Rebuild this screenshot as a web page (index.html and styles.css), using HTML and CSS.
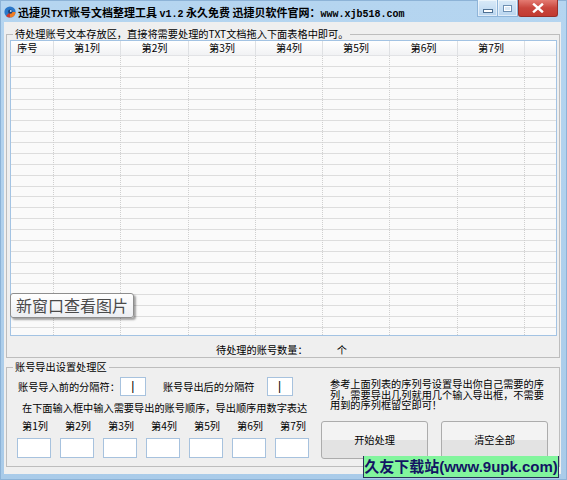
FILE: index.html
```html
<!DOCTYPE html>
<html lang="zh-CN">
<head>
<meta charset="utf-8">
<title>迅捷贝TXT账号文档整理工具</title>
<link rel="stylesheet" href="styles.css">
</head>
<body>
<div class="window">
  <div class="titlebar">
    <svg class="app-icon" viewBox="0 0 12 12">
      <circle cx="6" cy="6" r="5.6" fill="#2b78c9"/>
      <path d="M6 6 L11.6 6 A5.6 5.6 0 0 1 6 11.6 Z" fill="#ef7d22"/>
      <path d="M6 6 L6 11.6 A5.6 5.6 0 0 1 2 10 Z" fill="#d23a2a"/>
      <circle cx="6.3" cy="5.6" r="2.2" fill="#1b3f74"/>
      <circle cx="6.8" cy="5" r="0.9" fill="#bfe2ff"/>
    </svg>
    <div class="title">迅捷贝<span class="lat">TXT</span>账号文档整理工具 <span class="lat">v1.2</span> 永久免费 迅捷贝软件官网：<span class="lat">www.xjb518.com</span></div>
    <div class="caption">
      <div class="cb cb-min"><span class="min-glyph"></span></div>
      <div class="cb cb-max"><span class="max-glyph"></span></div>
      <div class="cb cb-close">
        <svg viewBox="0 0 12 10" class="x-glyph"><path d="M2 1.5 L10 8.5 M10 1.5 L2 8.5" stroke="#ffffff" stroke-width="2.4" stroke-linecap="square"/></svg>
      </div>
    </div>
  </div>
  <div class="client">
    <fieldset class="group group-list">
      <legend>待处理账号文本存放区，直接将需要处理的TXT文档拖入下面表格中即可。</legend>
      <div class="listview">
        <div class="lv-header">
          <div class="hcell first">序号</div>
          <div class="hcell">第1列</div>
          <div class="hcell">第2列</div>
          <div class="hcell">第3列</div>
          <div class="hcell">第4列</div>
          <div class="hcell">第5列</div>
          <div class="hcell">第6列</div>
          <div class="hcell">第7列</div>
          <div class="hcell filler"></div>
        </div>
        <div class="lv-body">
          <div class="col"></div>
          <div class="col"></div>
          <div class="col"></div>
          <div class="col"></div>
          <div class="col"></div>
          <div class="col"></div>
          <div class="col"></div>
          <div class="col"></div>
          <div class="col filler"></div>
        </div>
        <div class="popbtn">新窗口查看图片</div>
      </div>
      <div class="count-row"><span>待处理的账号数量：</span><span class="unit">个</span></div>
    </fieldset>
    <fieldset class="group group-export">
      <legend>账号导出设置处理区</legend>
      <div class="export">
        <div class="export-left">
          <div class="sep-row">
            <span class="sep-label">账号导入前的分隔符：</span>
            <div class="tb sep-box">|</div>
            <span class="sep-label second">账号导出后的分隔符</span>
            <div class="tb sep-box last">|</div>
          </div>
          <div class="hint">在下面输入框中输入需要导出的账号顺序，导出顺序用数字表达</div>
          <div class="cols-grid">
            <span class="clabel">第1列</span>
            <span class="clabel">第2列</span>
            <span class="clabel">第3列</span>
            <span class="clabel">第4列</span>
            <span class="clabel">第5列</span>
            <span class="clabel">第6列</span>
            <span class="clabel">第7列</span>
            <div class="tb"></div>
            <div class="tb"></div>
            <div class="tb"></div>
            <div class="tb"></div>
            <div class="tb"></div>
            <div class="tb"></div>
            <div class="tb"></div>
          </div>
        </div>
        <div class="export-right">
          <p class="note">参考上面列表的序列号设置导出你自己需要的序列，需要导出几列就用几个输入导出框，不需要用到的序列框留空即可！</p>
          <div class="btn-row">
            <button class="btn">开始处理</button>
            <button class="btn">清空全部</button>
          </div>
        </div>
      </div>
    </fieldset>
  </div>
</div>
<div class="watermark">久友下载站(www.9upk.com)</div>
</body>
</html>
```

FILE: styles.css
```css
* { box-sizing: border-box; }
html, body { margin: 0; padding: 0; }
body {
  width: 567px;
  height: 480px;
  overflow: hidden;
  position: relative;
  font-family: "Noto Sans CJK SC", "Noto Sans", sans-serif;
  font-size: 10.2px;
  color: #000;
  background: #aecfeb;
}
.window {
  width: 567px;
  height: 480px;
  background: linear-gradient(#b5d5f0, #a9cbe9);
  box-shadow: inset 0 0 0 1px #8db3d7;
  display: flex;
  flex-direction: column;
}
.titlebar {
  height: 22px;
  flex: none;
  display: flex;
  align-items: flex-start;
}
.app-icon { width: 12px; height: 12px; margin: 6px 0 0 4px; flex: none; }
.title {
  margin-left: 2px;
  padding-top: 6px;
  font-weight: bold;
  font-size: 11px;
  line-height: 13px;
  white-space: nowrap;
}
.title .lat { font-family: "Liberation Mono", monospace; font-size: 10px; }
.caption { margin-left: auto; margin-right: 9px; display: flex; height: 17px; }
.cb { height: 17px; display: flex; align-items: center; justify-content: center; }
.cb-min, .cb-max {
  width: 21px;
  background: linear-gradient(#d9eaf8, #b9d5ef);
  border: 1px solid #8fb5d9;
  border-top: none;
  box-shadow: inset 0 0 0 1px rgba(255,255,255,0.55);
}
.cb-max { width: 20px; border-left: none; }
.min-glyph {
  width: 10px; height: 4px;
  margin-top: 6px;
  background: #fff;
  border: 1px solid #4d6f92;
}
.max-glyph {
  width: 9px; height: 7px;
  border: 1px solid #6d8fb2;
  box-shadow: inset 0 0 0 1px #ffffff;
  background: #dbe9f6;
}
.cb-close {
  width: 40px;
  background: linear-gradient(#e47b72, #c9463d 50%, #c23a31);
  border: 1px solid #98302a;
  border-top: none;
  border-radius: 0 0 3px 3px;
}
.x-glyph { width: 12px; height: 10px; }

.client {
  margin: 0 6px 0 4px;
  height: 452px;
  background: #efefef;
  display: flex;
  flex-direction: column;
}

.group {
  margin: 0;
  padding: 0 2px 0 3px;
  border: 1px solid #bdbdbd;
  min-width: 0;
}
.group legend {
  padding: 0 2px;
  margin-left: 3px;
  height: 12px;
  line-height: 12px;
  font-size: 10.2px;
  white-space: nowrap;
}
.group-list { margin: 6px 1px 0 2px; padding-bottom: 1px; }
.group-export { margin: 3px 1px 0 2px; padding-bottom: 7px; }

.listview {
  position: relative;
  width: 547px;
  height: 296px;
  border: 1px solid #a3c3e3;
  background: #fafafa;
  display: flex;
  flex-direction: column;
}
.lv-header, .lv-body {
  display: grid;
  grid-template-columns: 43px 67px 68px 67px 67px 67px 68px 67px 1fr;
}
.lv-header {
  height: 15px;
  flex: none;
  background: linear-gradient(#ffffff, #f1f2f4);
  border-bottom: 1px solid #e2e3e6;
}
.hcell {
  line-height: 14px;
  text-align: center;
  border-right: 1px solid #dfe1e4;
  white-space: nowrap;
}
.hcell.first { text-align: left; padding-left: 6px; }
.hcell.filler, .col.filler { border-right: none; }
.lv-body {
  flex: 1;
  background: repeating-linear-gradient(to bottom, transparent 0 9.88px, #dddddd 9.88px 10.88px);
}
.col { border-right: 1px dotted #cfcfcf; }

.popbtn {
  position: absolute;
  left: -1px;
  top: 252px;
  width: 124px;
  height: 25px;
  padding-left: 5px;
  font-size: 16px;
  line-height: 23px;
  color: #4a4a4a;
  background: linear-gradient(#ffffff, #eceef2);
  border: 1px solid #8e8e8e;
  border-radius: 3px;
  box-shadow: 2px 2px 2px rgba(0,0,0,0.35);
  white-space: nowrap;
}

.count-row {
  margin: 8px 0 0 206px;
  height: 12px;
  line-height: 12px;
  display: flex;
  white-space: nowrap;
}
.count-row .unit { margin-left: 29px; }

.export { display: flex; margin-left: 7px; }
.export-left { width: 291px; flex: none; }
.export-right { width: 227px; margin-left: 13px; flex: none; }

.tb {
  height: 20px;
  background: #ffffff;
  border: 1px solid #a7c2de;
}
.sep-row {
  margin-top: 4px;
  height: 19px;
  display: flex;
  align-items: center;
  white-space: nowrap;
}
.sep-label { margin-left: 1px; line-height: 12px; }
.sep-label.second { margin-left: 17px; }
.sep-box {
  width: 26px;
  height: 19px;
  margin-left: 0;
  text-align: center;
  font-family: "Liberation Sans", sans-serif;
  font-size: 12px;
  line-height: 16px;
}
.sep-box.last { margin-left: 12px; }
.hint {
  margin: 6px 0 0 5px;
  line-height: 12px;
  white-space: nowrap;
}
.cols-grid {
  margin-top: 6px;
  display: grid;
  grid-template-columns: repeat(7, 34px);
  column-gap: 9px;
  row-gap: 6px;
}
.clabel {
  line-height: 12px;
  text-align: center;
  padding-left: 2px;
  white-space: nowrap;
}

.note {
  margin: 6px 0 0 9px;
  width: 216px;
  line-height: 10.5px;
}
.btn-row { display: flex; gap: 13px; margin-top: 10px; }
.btn {
  width: 107px;
  height: 38px;
  padding: 0;
  border: 1px solid #acacac;
  border-radius: 3px;
  background: linear-gradient(#f3f3f3 0 50%, #e3e3e3 50% 100%);
  font-family: "Noto Sans CJK SC", sans-serif;
  font-size: 10.2px;
  color: #000;
}

.watermark {
  position: absolute;
  left: 363px;
  top: 456px;
  width: 196px;
  height: 22px;
  background: #82f59d;
  border: 1px solid #27325a;
  border-top: none;
  color: #121463;
  font-family: "Liberation Sans", "Noto Sans CJK SC", sans-serif;
  font-weight: bold;
  font-size: 15px;
  line-height: 21px;
  text-align: center;
  white-space: nowrap;
}
```
